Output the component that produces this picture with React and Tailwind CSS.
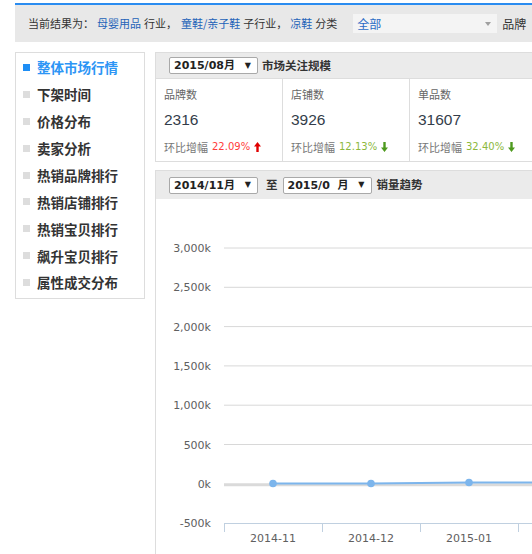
import React from "react";

const cjk = { fontFamily: '"Noto Sans CJK SC", "Noto Sans", sans-serif' };
const dv = { fontFamily: '"DejaVu Sans", "Noto Sans CJK SC", sans-serif' };

function Arrow({ up, color }) {
  return (
    <svg width="7" height="10" viewBox="0 0 7 10" className="inline-block ml-[4px]">
      {up ? (
        <path d="M3.5 0 L7 4.5 L4.7 4.5 L4.7 10 L2.3 10 L2.3 4.5 L0 4.5 Z" fill={color} />
      ) : (
        <path d="M3.5 10 L7 5.5 L4.7 5.5 L4.7 0 L2.3 0 L2.3 5.5 L0 5.5 Z" fill={color} />
      )}
    </svg>
  );
}

function Sel({ text }) {
  return (
    <div className="w-[89px] h-[17px] border border-[#a9a9a9] rounded-[2px] bg-white flex items-center justify-between pl-[4px] pr-[6px] shrink-0">
      <span className="text-[11px] font-bold text-[#222] whitespace-pre leading-none" style={dv}>{text}</span>
      <span className="text-[8px] text-[#222] leading-none" style={dv}>▼</span>
    </div>
  );
}

function Card({ label, value, pct, up, last }) {
  return (
    <div className={"w-[127px] shrink-0 h-[82px] pl-[8px] pt-[7px] " + (last ? "" : "border-r border-[#dddddd]")}>
      <div className="text-[11px] leading-[16px] text-[#666]" style={cjk}>{label}</div>
      <div className="mt-[6px] text-[15.5px] leading-[24px] text-[#333d4a]" style={{ fontFamily: '"Liberation Sans", sans-serif' }}>{value}</div>
      <div className="mt-[7px] flex items-center text-[11px] leading-[16px]">
        <span className="text-[#777]" style={cjk}>环比增幅</span>
        <span className={"ml-[4px] text-[10px] " + (up ? "text-[#ff3b3b]" : "text-[#8cb83c]")} style={dv}>{pct}</span>
        <Arrow up={up} color={up ? "#e00000" : "#4e9a1e"} />
      </div>
    </div>
  );
}

const menu = ["整体市场行情", "下架时间", "价格分布", "卖家分析", "热销品牌排行", "热销店铺排行", "热销宝贝排行", "飙升宝贝排行", "属性成交分布"];

function Chart() {
  const o = 2;
  const ys = [0, 1, 2, 3, 4, 5, 6].map((i) => 47 + o + i * 39.3);
  const labels = ["3,000k", "2,500k", "2,000k", "1,500k", "1,000k", "500k", "0k", "-500k"];
  const ticks = [68, 166, 264, 362];
  const pts = [[117, 282.5 + o], [215, 282.5 + o], [313, 281.5 + o], [411, 281.5 + o]];
  return (
    <svg width="380" height="356" viewBox="0 0 380 356" className="block">
      {ys.slice(0, 6).map((y, i) => (
        <line key={i} x1="68" x2="380" y1={y} y2={y} stroke="#d8d8d8" strokeWidth="1" />
      ))}
      <line x1="68" x2="380" y1={ys[6] + 1} y2={ys[6] + 1} stroke="#dadada" strokeWidth="3" />
      <line x1="68" x2="380" y1={322.5 + o} y2={322.5 + o} stroke="#c0d0e0" strokeWidth="1" />
      {ticks.map((x) => (
        <line key={x} x1={x + 0.5} x2={x + 0.5} y1={322 + o} y2={331 + o} stroke="#c0d0e0" strokeWidth="1" />
      ))}
      {labels.map((l, i) => (
        <text key={l} x="55" y={47 + o + i * 39.3 + 4} textAnchor="end" fontSize="11" fill="#606060" style={dv}>{l}</text>
      ))}
      {["2014-11", "2014-12", "2015-01"].map((l, i) => (
        <text key={l} x={117 + i * 98} y={341 + o} textAnchor="middle" fontSize="11" fill="#606060" style={dv}>{l}</text>
      ))}
      <polyline points={pts.map((p) => p.join(",")).join(" ")} fill="none" stroke="#7cb5ec" strokeWidth="2" />
      {pts.map((p, i) => (
        <circle key={i} cx={p[0]} cy={p[1]} r="3.8" fill="#7cb5ec" />
      ))}
    </svg>
  );
}

export default function App() {
  return (
    <div className="w-[532px] h-[554px] overflow-hidden bg-white" style={cjk}>
      <div className="ml-[15px] mt-[3px] w-[560px] h-[39px] border-t-2 border-[#2a8cf0] bg-[#e8e8e8] flex items-center whitespace-nowrap text-[11px] text-[#333] pl-[13px]">
        <span>当前结果为：</span>
        <span className="ml-[3px] text-[#2463b8]">母婴用品</span>
        <span className="ml-[3px]">行业，</span>
        <span className="ml-[4px] text-[#2463b8]">童鞋/亲子鞋</span>
        <span className="ml-[3px]">子行业，</span>
        <span className="ml-[3px] text-[#2463b8]">凉鞋</span>
        <span className="ml-[3px]">分类</span>
        <div className="ml-[16px] w-[144px] h-[19px] bg-[#f4f4f4] flex items-center justify-between pl-[4px] pr-[6px]">
          <span className="text-[12px] text-[#2a6cc6]">全部</span>
          <svg width="6" height="4" viewBox="0 0 6 4"><path d="M0 0 L6 0 L3 4 Z" fill="#a0a0a0" /></svg>
        </div>
        <span className="ml-[5px] text-[12px]">品牌</span>
      </div>

      <div className="mt-[10px] flex items-start">
        <div className="ml-[15px] w-[130px] h-[247px] shrink-0 border border-[#dddddd] bg-white pt-[1px]">
          {menu.map((m, i) => (
            <div key={m} className="h-[26.9px] flex items-center">
              <span className={"ml-[7px] w-[7px] h-[7px] " + (i === 0 ? "bg-[#1e8ef5]" : "bg-[#dddddd]")} />
              <span className={"ml-[7px] text-[13.5px] font-bold " + (i === 0 ? "text-[#2c95f5]" : "text-[#333]")}>{m}</span>
            </div>
          ))}
        </div>

        <div className="ml-[10px] w-[400px] shrink-0">
          <div className="border border-[#dddddd]">
            <div className="h-[26px] bg-[#ebebeb] border-b border-[#dddddd] flex items-center pl-[13px]">
              <Sel text="2015/08月" />
              <span className="ml-[4px] text-[11.5px] font-bold text-[#333]">市场关注规模</span>
            </div>
            <div className="flex bg-white">
              <Card label="品牌数" value="2316" pct="22.09%" up />
              <Card label="店铺数" value="3926" pct="12.13%" />
              <Card label="单品数" value="31607" pct="32.40%" last />
            </div>
          </div>

          <div className="mt-[8px] border border-[#dddddd] bg-white">
            <div className="h-[28px] bg-[#ebebeb] flex items-center pl-[13px]">
              <Sel text="2014/11月" />
              <span className="ml-[8px] text-[11.5px] font-bold text-[#333]">至</span>
              <span className="ml-[5px]"><Sel text={"2015/0  月"} /></span>
              <span className="ml-[5px] text-[11.5px] font-bold text-[#333]">销量趋势</span>
            </div>
            <Chart />
          </div>
        </div>
      </div>
    </div>
  );
}
